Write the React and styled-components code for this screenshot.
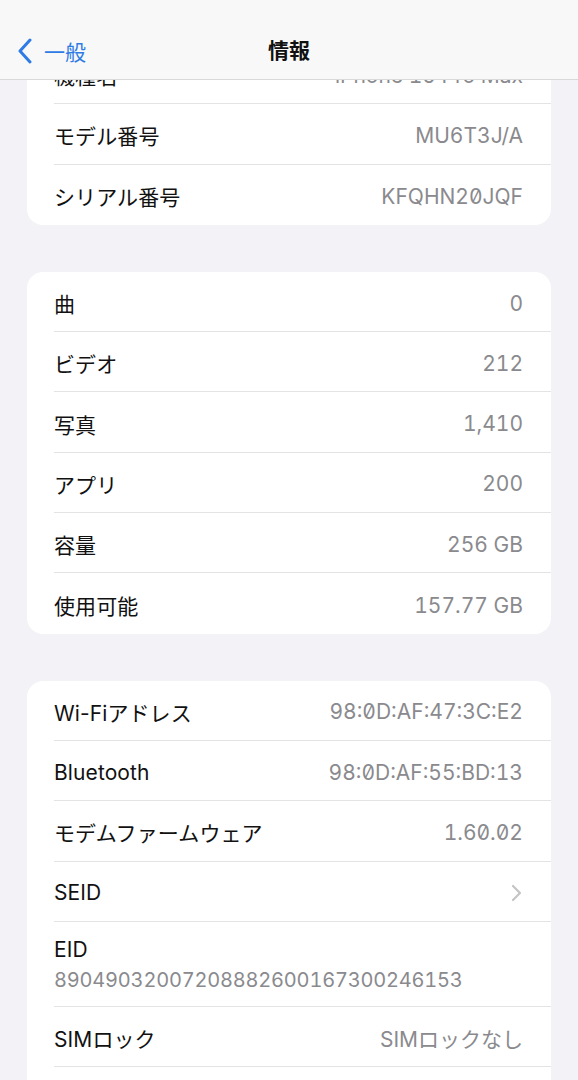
import React from 'react';
import styled, { createGlobalStyle } from 'styled-components';

const GlobalStyle = createGlobalStyle`
  html, body {
    margin: 0;
    padding: 0;
    background: #f2f2f7;
    font-family: Inter, "Noto Sans CJK JP", sans-serif;
    -webkit-font-smoothing: antialiased;
  }
`;

const Screen = styled.div`
  position: relative;
  width: 578px;
  height: 1080px;
  overflow: hidden;
  background: #f2f2f7;
`;

const Content = styled.div`
  padding: 44px 27px 0 27px;
  display: flex;
  flex-direction: column;
  gap: 47px;
`;

const NavBar = styled.div`
  position: absolute;
  top: 0;
  left: 0;
  right: 0;
  height: 80px;
  background: #f8f8f8;
  border-bottom: 1px solid #d9d9dc;
  display: flex;
  align-items: center;
  justify-content: center;
  padding-top: 20px;
  box-sizing: border-box;
  z-index: 2;
`;

const BackButton = styled.div`
  position: absolute;
  left: 16px;
  top: 38px;
  display: flex;
  align-items: center;
  gap: 10px;
  color: #2f7be6;
  font-size: 21px;
  font-family: "Noto Sans CJK JP", sans-serif;
  line-height: 24px;
`;

const Title = styled.div`
  font-size: 21px;
  font-weight: 700;
  color: #111;
  font-family: "Noto Sans CJK JP", sans-serif;
  margin-top: -1px;
`;

const Card = styled.div`
  background: #fff;
  border-radius: 16px;
  overflow: hidden;
`;

const Row = styled.div`
  padding-left: 27px;
`;

const RowInner = styled.div`
  min-height: ${(p) => (p.$tall ? 85 : 60.3)}px;
  box-sizing: border-box;
  border-bottom: ${(p) => (p.$last ? 'none' : '1px solid #e3e3e6')};
  display: flex;
  flex-direction: ${(p) => (p.$stack ? 'column' : 'row')};
  align-items: ${(p) => (p.$stack ? 'flex-start' : 'center')};
  justify-content: ${(p) => (p.$stack ? 'center' : 'space-between')};
  padding: ${(p) => (p.$stack ? '1px 28px 0 0' : '3px 28px 0 0')};
  gap: ${(p) => (p.$stack ? '6px' : '12px')};
`;

const Label = styled.span`
  font-size: 21px;
  color: #111;
  letter-spacing: 0.1px;
`;

const Value = styled.span`
  font-size: 21px;
  color: #8a8a8e;
  font-feature-settings: ${(p) => (p.$mono ? "'tnum', 'zero'" : "'tnum'")};
  display: flex;
  align-items: center;
`;

const EidNumber = styled.span`
  font-size: 20px;
  color: #8a8a8e;
  font-feature-settings: 'tnum';
  letter-spacing: -0.2px;
`;

const Chevron = () => (
  <svg width="14" height="18" viewBox="0 0 14 18">
    <polyline points="4,2 11,9 4,16" fill="none" stroke="#c4c4c7" strokeWidth="2.2" strokeLinecap="round" strokeLinejoin="round" />
  </svg>
);

const BackChevron = () => (
  <svg width="18" height="26" viewBox="0 0 18 26">
    <polyline points="14,2 4,13 14,24" fill="none" stroke="#2f7be6" strokeWidth="3" strokeLinecap="round" strokeLinejoin="round" />
  </svg>
);

const sections = [
  [
    { label: '機種名', value: 'iPhone 15 Pro Max' },
    { label: 'モデル番号', value: 'MU6T3J/A' },
    { label: 'シリアル番号', value: 'KFQHN20JQF', mono: true },
  ],
  [
    { label: '曲', value: '0' },
    { label: 'ビデオ', value: '212' },
    { label: '写真', value: '1,410' },
    { label: 'アプリ', value: '200' },
    { label: '容量', value: '256 GB' },
    { label: '使用可能', value: '157.77 GB' },
  ],
  [
    { label: 'Wi-Fiアドレス', value: '98:0D:AF:47:3C:E2', mono: true },
    { label: 'Bluetooth', value: '98:0D:AF:55:BD:13', mono: true },
    { label: 'モデムファームウェア', value: '1.60.02', mono: true },
    { label: 'SEID', chevron: true },
    { label: 'EID', eid: '89049032007208882600167300246153' },
    { label: 'SIMロック', value: 'SIMロックなし' },
    { label: '', value: '' },
  ],
];

export default function App() {
  return (
    <>
      <GlobalStyle />
      <Screen>
        <NavBar>
          <BackButton>
            <BackChevron />
            <span>一般</span>
          </BackButton>
          <Title>情報</Title>
        </NavBar>
        <Content>
          {sections.map((rows, i) => (
            <Card key={i}>
              {rows.map((r, j) => (
                <Row key={j}>
                  {r.eid ? (
                    <RowInner $tall $stack $last={j === rows.length - 1}>
                      <Label>{r.label}</Label>
                      <EidNumber>{r.eid}</EidNumber>
                    </RowInner>
                  ) : (
                    <RowInner $last={j === rows.length - 1}>
                      <Label>{r.label}</Label>
                      <Value $mono={r.mono}>{r.chevron ? <Chevron /> : r.value}</Value>
                    </RowInner>
                  )}
                </Row>
              ))}
            </Card>
          ))}
        </Content>
      </Screen>
    </>
  );
}
